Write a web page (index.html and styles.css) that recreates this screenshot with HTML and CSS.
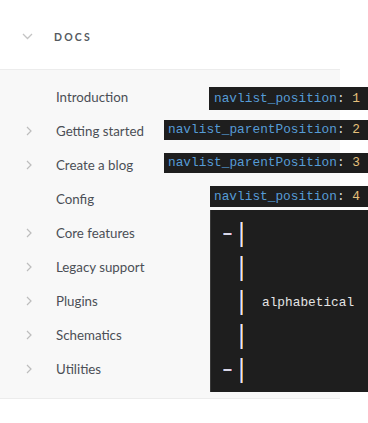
FILE: index.html
```html
<!DOCTYPE html>
<html lang="en">
<head>
    <meta charset="UTF-8">
    <meta name="viewport" content="width=device-width, initial-scale=1.0">
    <title>Docs navigation</title>
    <link rel="stylesheet" href="styles.css">
</head>
<body>
    <div class="page">
        <div class="section-head">
            <svg class="chev-down" width="11" height="7" viewBox="0 0 11 7"><path d="M1 1 L5.5 5.5 L10 1" fill="none" stroke="#c4c4c4" stroke-width="1.3"/></svg>
            <span class="section-title">DOCS</span>
        </div>

        <ul class="navlist">
            <li class="nav-item"><span class="chev"></span>Introduction</li>
            <li class="nav-item"><span class="chev"><svg width="6" height="10" viewBox="0 0 6 10"><path d="M1 1 L5 5 L1 9" fill="none" stroke="#bdbdbd" stroke-width="1.2"/></svg></span>Getting started</li>
            <li class="nav-item"><span class="chev"><svg width="6" height="10" viewBox="0 0 6 10"><path d="M1 1 L5 5 L1 9" fill="none" stroke="#bdbdbd" stroke-width="1.2"/></svg></span>Create a blog</li>
            <li class="nav-item"><span class="chev"></span>Config</li>
            <li class="nav-item"><span class="chev"><svg width="6" height="10" viewBox="0 0 6 10"><path d="M1 1 L5 5 L1 9" fill="none" stroke="#bdbdbd" stroke-width="1.2"/></svg></span>Core features</li>
            <li class="nav-item"><span class="chev"><svg width="6" height="10" viewBox="0 0 6 10"><path d="M1 1 L5 5 L1 9" fill="none" stroke="#bdbdbd" stroke-width="1.2"/></svg></span>Legacy support</li>
            <li class="nav-item"><span class="chev"><svg width="6" height="10" viewBox="0 0 6 10"><path d="M1 1 L5 5 L1 9" fill="none" stroke="#bdbdbd" stroke-width="1.2"/></svg></span>Plugins</li>
            <li class="nav-item"><span class="chev"><svg width="6" height="10" viewBox="0 0 6 10"><path d="M1 1 L5 5 L1 9" fill="none" stroke="#bdbdbd" stroke-width="1.2"/></svg></span>Schematics</li>
            <li class="nav-item"><span class="chev"><svg width="6" height="10" viewBox="0 0 6 10"><path d="M1 1 L5 5 L1 9" fill="none" stroke="#bdbdbd" stroke-width="1.2"/></svg></span>Utilities</li>
        </ul>

        <!-- code annotations laid over the list -->
        <div class="code code-1"><span class="key">navlist_position</span><span class="colon">:</span> <span class="num">1</span></div>
        <div class="code code-2"><span class="key">navlist_parentPosition</span><span class="colon">:</span> <span class="num">2</span></div>
        <div class="code code-3"><span class="key">navlist_parentPosition</span><span class="colon">:</span> <span class="num">3</span></div>
        <div class="code code-4"><span class="key">navlist_position</span><span class="colon">:</span> <span class="num">4</span></div>

        <div class="code-block">
            <div class="brace-row"><span class="dash"></span><span class="bar"></span></div>
            <div class="brace-row"><span class="dash off"></span><span class="bar"></span></div>
            <div class="brace-row"><span class="dash off"></span><span class="bar"></span><span class="label">alphabetical</span></div>
            <div class="brace-row"><span class="dash off"></span><span class="bar"></span></div>
            <div class="brace-row"><span class="dash"></span><span class="bar"></span></div>
        </div>
    </div>
</body>
</html>
```

FILE: styles.css
```css
/* Page */
body {
    margin: 0;
    background: #ffffff;
    font-family: 'Lato', 'Noto Sans', sans-serif;
    color: #4a4a4a;
}

.page {
    position: relative;
    width: 368px;
    height: 423px;
    overflow: hidden;
}

/* Section header */
.section-head {
    height: 69px;
    display: flex;
    align-items: center;
    padding: 4px 0 0 22px;
    box-sizing: border-box;
}

.section-title {
    margin-left: 21px;
    font-size: 10.5px;
    font-weight: bold;
    letter-spacing: 2.2px;
    color: #555a60;
}

/* Nav list */
.navlist {
    list-style: none;
    margin: 0;
    padding: 10px 0 12px;
    width: 340px;
    background: #f8f8f8;
    border-top: 1px solid #ececec;
    border-bottom: 1px solid #ececec;
    box-sizing: border-box;
}

.nav-item {
    height: 34px;
    display: flex;
    align-items: center;
    font-size: 13.3px;
    color: #4b4f56;
}

.chev {
    width: 56px;
    padding-left: 26px;
    box-sizing: border-box;
    display: flex;
    align-items: center;
}

/* Code annotations */
.code {
    position: absolute;
    background: #1e1e1e;
    font-family: 'Liberation Mono', 'DejaVu Sans Mono', monospace;
    font-size: 12.8px;
    line-height: 20px;
    padding: 0 8px 0 5px;
    white-space: nowrap;
    color: #d4d4d4;
}

.key { color: #569cd6; }
.colon { color: #d4d4d4; }
.num { color: #e5c07b; }

.code-1 { left: 209px; top: 87px; height: 23px; line-height: 23px; }
.code-2 { left: 164px; top: 120px; height: 20px; padding-left: 4px; }
.code-3 { left: 164px; top: 153px; height: 20px; padding-left: 4px; }
.code-4 { left: 210px; top: 186px; height: 21px; line-height: 21px; padding-left: 4px; }

.code-block {
    position: absolute;
    left: 210px;
    top: 210px;
    width: 170px;
    height: 182px;
    background: #1e1e1e;
    border-left: 1px solid #3a3a3a;
    padding-top: 7px;
    box-sizing: border-box;
}

.brace-row {
    height: 34px;
    display: flex;
    align-items: center;
    padding-left: 12px;
}

.dash {
    width: 9px;
    height: 2px;
    background: #d8d8e8;
    border-left: 1px solid #6b8fd8;
    border-right: 1px solid #d86b6b;
    box-sizing: border-box;
}

.dash.off {
    visibility: hidden;
}

.bar {
    width: 3px;
    height: 25px;
    margin-left: 8px;
    background: #e8e8f0;
    border-left: 1px solid #5f86d6;
    border-right: 1px solid #d9963f;
    box-sizing: border-box;
}

.label {
    margin-left: 19px;
    font-family: 'Liberation Mono', 'DejaVu Sans Mono', monospace;
    font-size: 12.8px;
    color: #e4e4e4;
}
```
